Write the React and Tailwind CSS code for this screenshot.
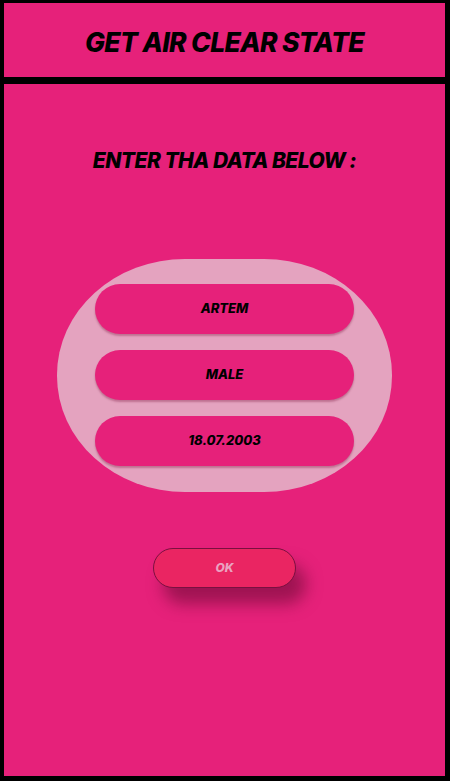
import React from 'react';

export default function App() {
  const fields = ['ARTEM', 'MALE', '18.07.2003'];

  return (
    <div
      className="w-[450px] h-[781px] bg-black flex flex-col pt-[3px] pl-[4px] pr-[5px] pb-[5px]"
      style={{ fontFamily: 'Inter, "Liberation Sans", sans-serif' }}
    >
      {/* ─── HEADER ─────────────────────────────────────────── */}
      <header className="h-[74px] bg-[#e6217a] flex items-center justify-center pt-[5px]">
        <h1 className="text-[26.5px] font-extrabold italic text-black tracking-tight">
          GET AIR CLEAR STATE
        </h1>
      </header>

      <div className="h-[7px]" />

      {/* ─── MAIN ───────────────────────────────────────────── */}
      <main className="flex-1 bg-[#e6217a] flex flex-col items-center">
        <h2 className="mt-[61px] text-[21px] font-extrabold italic text-black tracking-tight">
          ENTER THA DATA BELOW :
        </h2>

        <div className="mt-[82px] w-[335px] h-[233px] bg-[#e4a3bf] rounded-[128px/116px] flex flex-col items-center justify-center gap-[16px]">
          {fields.map((f) => (
            <div
              key={f}
              className="w-[259px] h-[50px] bg-[#e6217a] rounded-[25px] flex items-center justify-center shadow-[0_2px_2px_rgba(120,20,60,0.35)]"
            >
              <span className="text-[13px] font-extrabold italic text-black">{f}</span>
            </div>
          ))}
        </div>

        <button className="mt-[56px] w-[143px] h-[40px] bg-[#ea2562] border border-[#7a1040] rounded-[20px] flex items-center justify-center shadow-[10px_16px_16px_rgba(100,10,50,0.55)]">
          <span className="text-[12px] font-extrabold italic text-[#eaa3c0]">OK</span>
        </button>
      </main>
    </div>
  );
}
